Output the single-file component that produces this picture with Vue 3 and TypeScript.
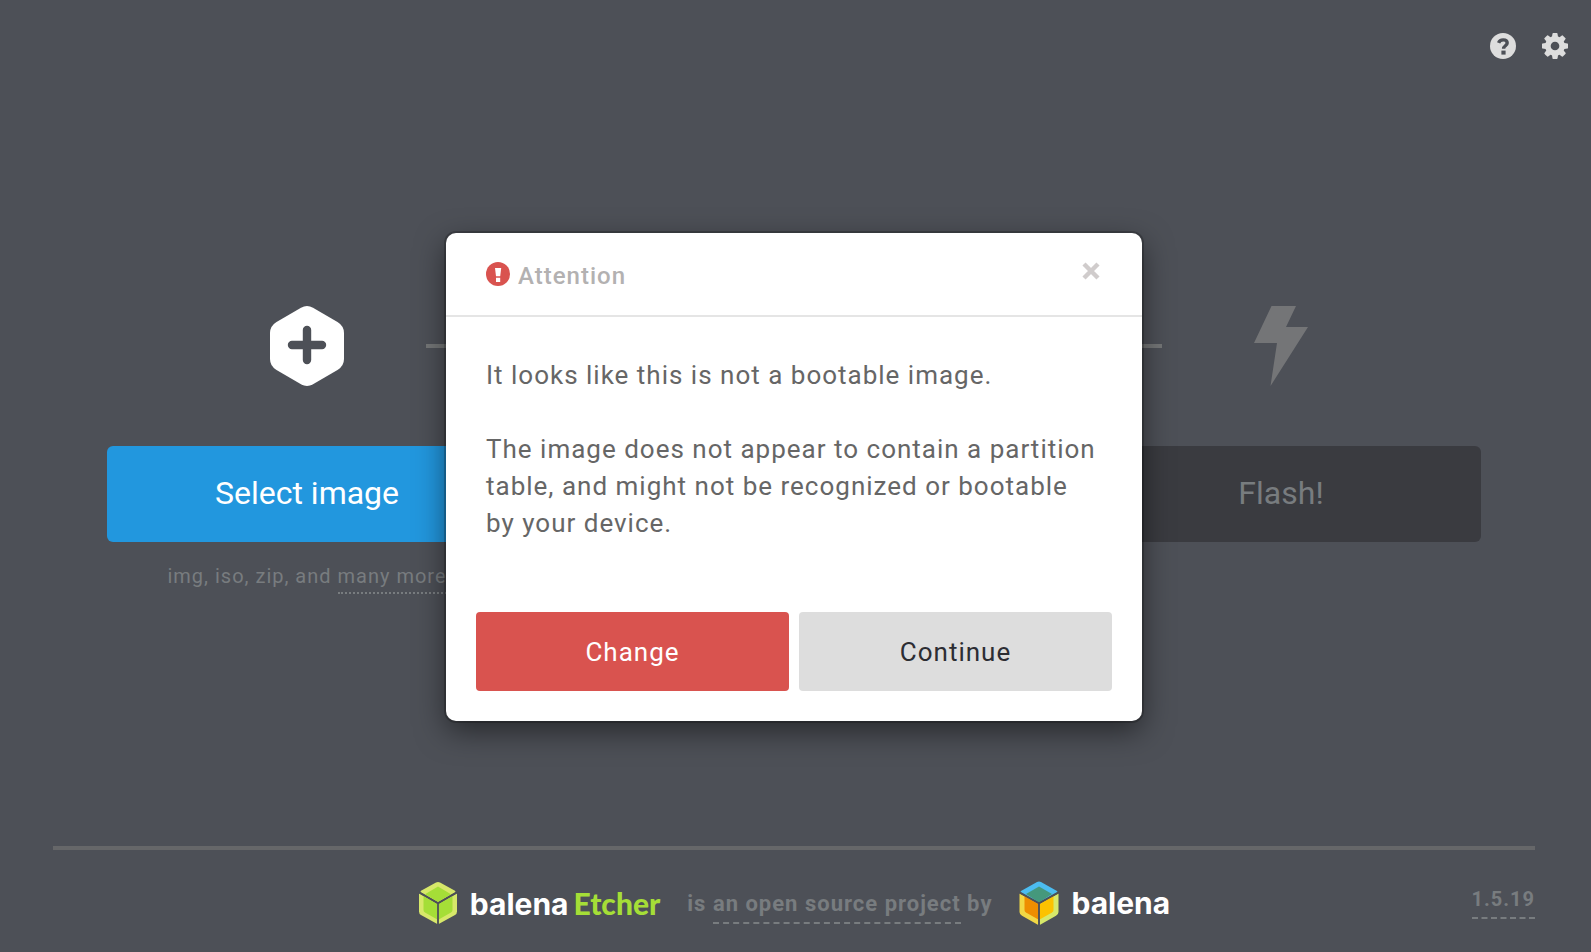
<script setup lang="ts">
import { ref } from 'vue'

const version = '1.5.19'
const warningOpen = ref<boolean>(true)

function dismiss(): void {
  warningOpen.value = false
}
</script>

<template>
  <div class="app">
    <header class="toolbar">
      <button class="icon-button" type="button" aria-label="Help">
        <svg viewBox="0 0 26 26" width="26" height="26">
          <circle cx="13" cy="13" r="13" fill="#ddd" />
          <path d="M8.600 9.800C9.400 7.600 11 6.900 13.200 6.900c2.400 0 4 1.200 4 3.100 0 2.800-3.600 2.700-3.600 5.700" fill="none" stroke="#4d5057" stroke-width="3.400" />
          <rect x="11.400" y="17.600" width="4.200" height="4" fill="#4d5057" />
        </svg>
      </button>
      <button class="icon-button" type="button" aria-label="Settings">
        <svg viewBox="0 0 1536 1536" width="26" height="26">
          <path fill="#ddd" d="M1024 768q0-106-75-181t-181-75-181 75-75 181 75 181 181 75 181-75 75-181zm512-109v222q0 12-8 23t-20 13l-185 28q-19 54-39 91 35 50 107 138 10 12 10 25t-9 23q-27 37-99 108t-94 71q-12 0-26-9l-138-108q-44 23-91 38-16 136-29 186-7 28-36 28h-222q-14 0-24.500-8.500t-11.500-21.500l-28-184q-49-16-90-37l-141 107q-10 9-25 9-14 0-25-11-126-114-165-168-7-10-7-23 0-12 8-23 15-21 51-66.500t54-70.500q-27-50-41-99l-183-27q-13-2-21-12.500t-8-23.500v-222q0-12 8-23t19-13l186-28q14-46 39-92-40-57-107-138-10-12-10-24 0-10 9-23 26-36 98.500-107.500t94.500-71.500q13 0 26 10l138 107q44-23 91-38 16-136 29-186 7-28 36-28h222q14 0 24.500 8.500t11.500 21.500l28 184q49 16 90 37l142-107q9-9 24-9 13 0 25 10 129 119 165 170 7 8 7 22 0 12-8 23-15 21-51 66.500t-54 70.500q26 50 41 98l183 28q13 2 21 12.500t8 23.500z" />
        </svg>
      </button>
    </header>

    <main class="steps">
      <span class="connector"></span>
      <section class="step step-source">
        <svg class="step-icon" viewBox="0 0 74 80" width="74" height="80">
          <path fill="#fff" d="M31 1.700q6-3.400 12 0l24.500 14.200q6.500 4 6.500 11v26.200q0 7-6.500 11L43 78.300q-6 3.400-12 0L6.500 64.100q-6.500-4-6.500-11V26.900q0-7 6.500-11z" />
          <path d="M37 24v30M22 39h30" fill="none" stroke="#4d5057" stroke-width="8.400" stroke-linecap="round" />
        </svg>
        <button class="step-button primary" type="button">Select image</button>
        <p class="hint">img, iso, zip, and <a href="#formats">many more</a></p>
      </section>
      <section class="step step-flash">
        <svg class="step-icon" viewBox="0 0 54 80" width="54" height="80">
          <path fill="#747577" d="M17.500 0H42L32 21h22L16.500 80 23 37H0z" />
        </svg>
        <button class="step-button" type="button" disabled>Flash!</button>
      </section>
    </main>

    <footer class="footer">
      <span></span>
      <div class="credits">
        <a class="brand" href="#etcher">
          <svg viewBox="0 0 40 44" width="40" height="44">
            <path fill="#d7e86a" d="M18 1.500q2-1 4 0l15 8.300q1 .7 0 1.400L20 21 3 11.200q-1-.7 0-1.400z" />
            <path fill="#a5de37" d="M20 5.500 33 13.200 20 21 7 13.200z" />
            <path fill="#d7e86a" d="M1 12.500 19.300 23v20L3 34q-2-1.200-2-3.500zM39 12.500 20.700 23v20L37 34q2-1.200 2-3.500z" />
            <path fill="#a5de37" d="M5.500 15 19.300 23v15.500L7 31.500q-1.500-1-1.500-2.500zM34.500 15 20.700 23v15.500L33 31.500q1.500-1 1.500-2.500z" />
            <path d="M1 11.400 20 22.300 39 11.400M20 22v22" fill="none" stroke="#4d5057" stroke-width="1.600" />
          </svg>
          <span class="wordmark">balena<b>Etcher</b></span>
        </a>
        <span class="tagline">is <a href="#source">an open source project</a> by</span>
        <a class="brand" href="#balena">
          <svg viewBox="0 0 40 44" width="40" height="44">
            <path fill="#4cbcf0" d="M18 1q2-1 4 0l16 9q1 .7 0 1.400L20 21.500 2 11.400q-1-.7 0-1.400z" />
            <path fill="#45987c" d="M20 5.500 33 13 20 21.500 7 13z" />
            <path fill="#f2d845" d="M.5 12.500 19.300 23v21L3 34.800q-2.500-1.300-2.500-3.800z" />
            <path fill="#d7e86a" d="M39.500 12.500 20.700 23v21L37 34.800q2.500-1.300 2.500-3.800z" />
            <path fill="#ee8e00" d="M5.500 15 19.300 23v15.500L7 31.500q-1.500-1-1.500-2.500z" />
            <path fill="#fcc200" d="M34.500 15 20.700 23v15.500L33 31.500q1.500-1 1.500-2.500z" />
            <path d="M.5 11.400 20 22.300 39.500 11.400M20 22v22" fill="none" stroke="#4d5057" stroke-width="1.800" />
          </svg>
          <span class="wordmark">balena</span>
        </a>
      </div>
      <a class="version" href="#changelog">{{ version }}</a>
    </footer>

    <div v-if="warningOpen" class="overlay">
      <div class="modal" role="dialog" aria-modal="true" aria-labelledby="warning-title">
        <div class="modal-header">
          <svg viewBox="0 0 24 24" width="24" height="24">
            <circle cx="12" cy="12" r="12" fill="#d9534f" />
            <path fill="#fff" d="M9 6h6.200l-1 8.200H10zM10 15.800h4.200V20H10z" />
          </svg>
          <h1 id="warning-title">Attention</h1>
          <button class="close" type="button" aria-label="Close" @click="dismiss">
            <svg viewBox="0 0 18 18" width="18" height="18">
              <path d="M2 2l14 14M16 2 2 16" fill="none" stroke="#d0cccc" stroke-width="4.400" />
            </svg>
          </button>
        </div>
        <div class="modal-body">
          <p>It looks like this is not a bootable image.</p>
          <p>The image does not appear to contain a partition table, and might not be recognized or bootable by your device.</p>
        </div>
        <div class="modal-actions">
          <button class="danger" type="button" @click="dismiss">Change</button>
          <button type="button" @click="dismiss">Continue</button>
        </div>
      </div>
    </div>
  </div>
</template>

<style>
body {
  margin: 0;
  background: #4d5057;
}
</style>

<style scoped>
.app {
  position: relative;
  box-sizing: border-box;
  min-height: 100vh;
  padding-right: 3px;
  display: flex;
  flex-direction: column;
  background: #4d5057;
  color: #787c7f;
  font-family: Roboto, "Liberation Sans", sans-serif;
}

button {
  border: 0;
  padding: 0;
  font: inherit;
  cursor: pointer;
}

svg {
  display: block;
  flex: none;
}

a {
  color: inherit;
  text-decoration: none;
}

.toolbar {
  display: flex;
  justify-content: flex-end;
  gap: 26px;
  padding: 33px 20px 0;
}

.icon-button {
  background: none;
}

.steps {
  flex: 1;
  display: grid;
  grid-template-columns: repeat(3, 1fr);
  column-gap: 87px;
  align-content: center;
  padding: 0 107px 8px;
}

.connector {
  grid-area: 1 / 1 / 2 / 4;
  height: 4px;
  margin: 38px 319px 0;
  background: #747677;
}

.step {
  grid-row: 1;
  display: flex;
  flex-direction: column;
  align-items: center;
}

.step-source {
  grid-column: 1;
}

.step-flash {
  grid-column: 3;
}

.step-button {
  width: 100%;
  height: 96px;
  margin-top: 60px;
  padding-bottom: 2px;
  border-radius: 6px;
  background: #3a3b40;
  color: #787c7f;
  font-size: 32px;
}

.step-button.primary {
  background: #2297de;
  color: #fff;
}

.hint {
  margin: 19px 0 0;
  font-size: 20px;
  line-height: 30px;
  letter-spacing: 1px;
}

.hint a {
  padding-bottom: 4px;
  border-bottom: 2px dotted #787c7f;
}

.footer {
  box-sizing: border-box;
  display: grid;
  grid-template-columns: 1fr auto 1fr;
  align-items: center;
  height: 106px;
  margin: 0 53px;
  padding-top: 4px;
  border-top: 4px solid #666769;
}

.credits {
  display: flex;
  align-items: center;
}

.brand {
  display: flex;
  align-items: center;
  gap: 12px;
}

.wordmark {
  display: flex;
  align-items: baseline;
  gap: 5px;
  color: #fff;
  font-family: Inter, sans-serif;
  font-size: 30px;
  font-weight: 700;
  line-height: 40px;
}

.wordmark b {
  color: #a5de37;
  font-family: Lato, sans-serif;
  font-weight: 900;
}

.tagline {
  margin: 0 27px;
  font-size: 22px;
  font-weight: 700;
  letter-spacing: 1px;
}

.tagline a,
.version {
  padding-bottom: 6px;
  border-bottom: 2px dashed #787c7f;
}

.version {
  justify-self: end;
  font-size: 20px;
  font-weight: 700;
  letter-spacing: 1px;
}

.overlay {
  position: absolute;
  inset: 0 3px 0 0;
  display: flex;
  align-items: center;
  justify-content: center;
}

.modal {
  width: 696px;
  max-width: 100%;
  margin-top: 2px;
  border-radius: 10px;
  background: #fff;
  box-shadow: 0 0 0 2px rgba(0, 0, 0, 0.2), 0 10px 30px rgba(0, 0, 0, 0.5);
}

.modal-header {
  display: flex;
  align-items: center;
  height: 82px;
  padding: 0 42px 0 40px;
  border-bottom: 2px solid #e5e5e5;
}

.modal-header h1 {
  flex: 1;
  margin: 4px 0 0 8px;
  color: #b3b1b1;
  font-size: 24px;
  font-weight: 500;
  letter-spacing: 1px;
}

.close {
  margin-bottom: 6px;
  background: none;
}

.modal-body {
  padding: 40px 40px 0;
  color: #666;
  font-size: 26px;
  line-height: 37px;
  letter-spacing: 1px;
}

.modal-body p {
  margin: 0 0 37px;
}

.modal-actions {
  display: grid;
  grid-template-columns: 1fr 1fr;
  gap: 10px;
  padding: 33px 30px 30px;
}

.modal-actions button {
  height: 79px;
  border-radius: 4px;
  background: #ddd;
  color: #2c2d33;
  font-size: 26px;
  letter-spacing: 1px;
}

.modal-actions .danger {
  background: #d9534f;
  color: #fff;
}
</style>
